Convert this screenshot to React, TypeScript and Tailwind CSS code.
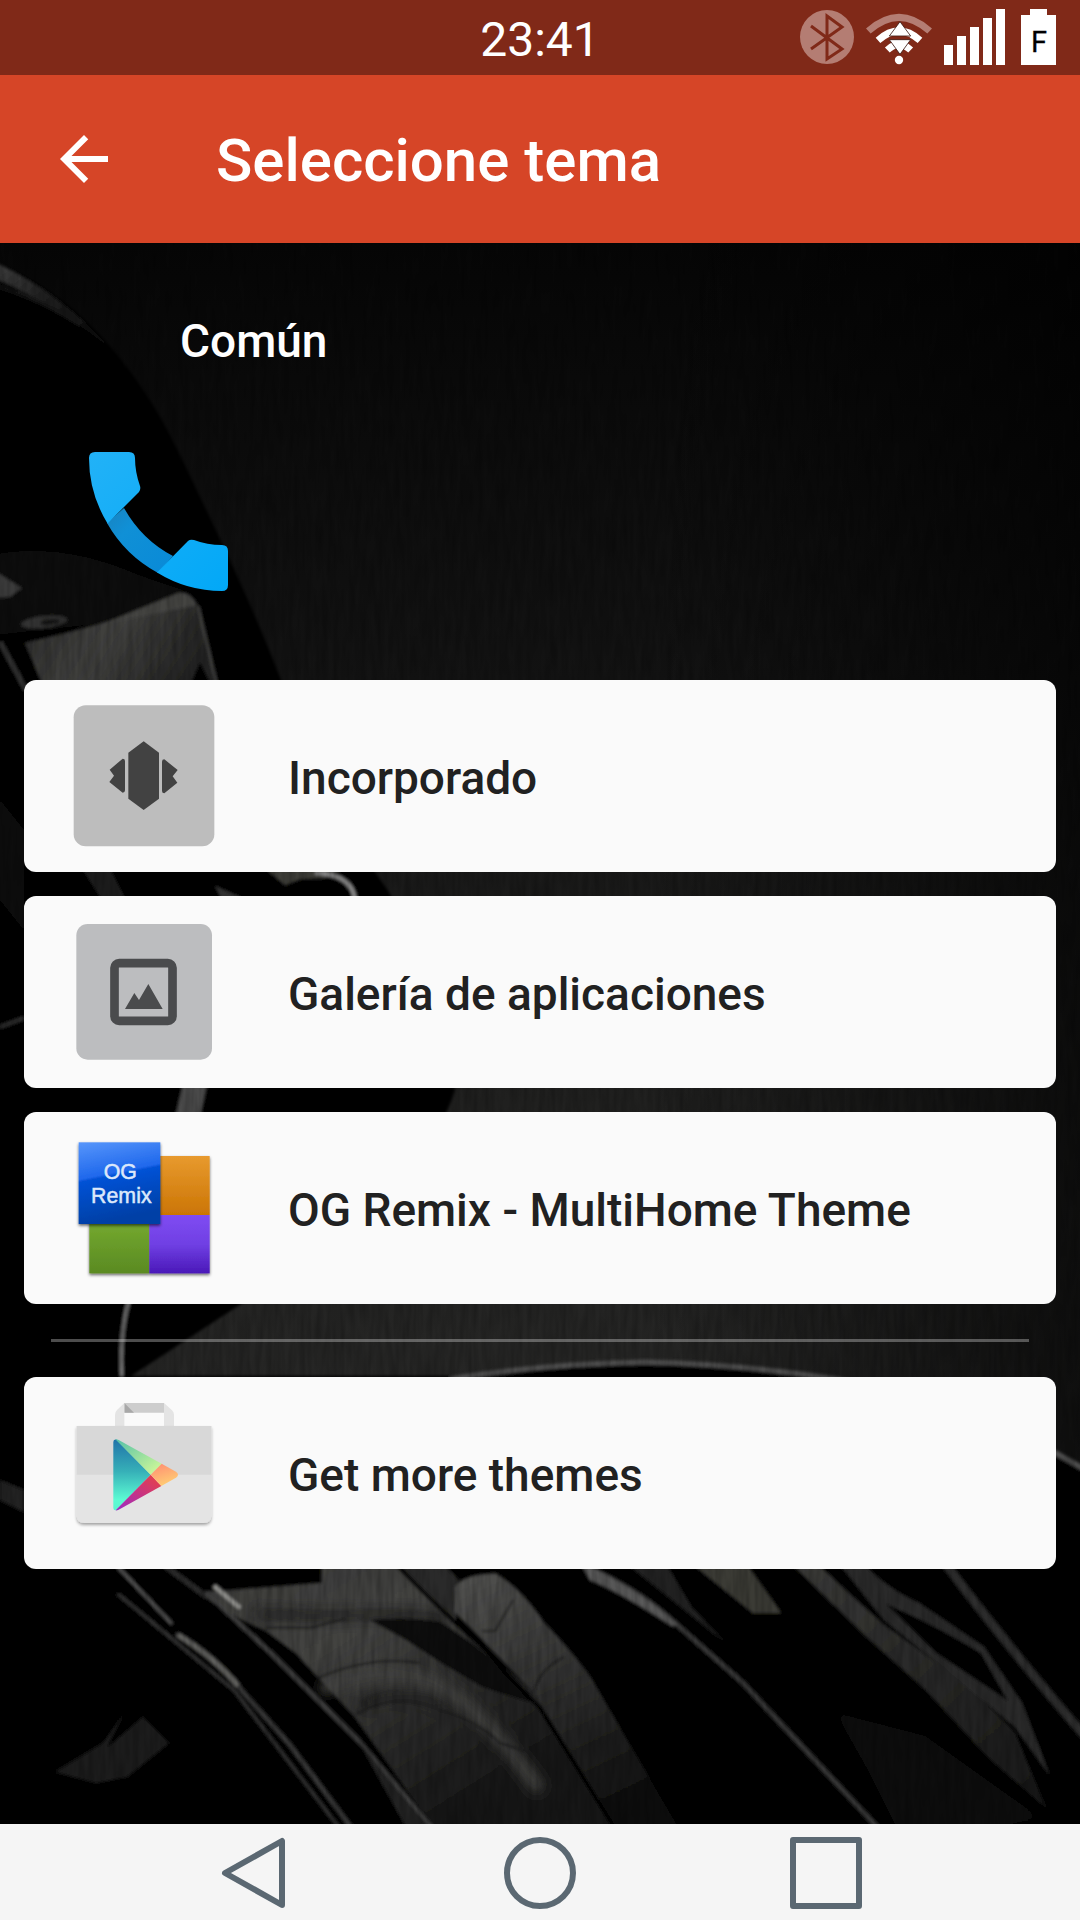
import type { ReactNode } from 'react';

interface ThemeOption {
  id: string;
  name: string;
  icon: ReactNode;
}

function BluetoothIcon() {
  return (
    <svg viewBox="0 0 54 54" className="size-[54px]" aria-hidden="true">
      <circle cx="27" cy="27" r="27" fill="#b47d73" />
      <path
        d="M11 16 L42 39 L27 49 V6 L42 17 L11 39"
        fill="none"
        stroke="#802918"
        strokeWidth="3"
      />
    </svg>
  );
}

function WifiIcon() {
  return (
    <svg viewBox="255 30 198 168" className="h-[56px] w-[66px]" aria-hidden="true">
      <path d="M262 96 Q354 14 446 96" fill="none" stroke="#b47d73" strokeWidth="21" />
      <path d="M291 124 Q354 68 417 124" fill="none" stroke="#fff" strokeWidth="21" />
      <path d="M319 153 Q354 120 389 153" fill="none" stroke="#fff" strokeWidth="21" />
      <path d="M357 68 L389 111 H325 Z" fill="#fff" stroke="#3b1a14" strokeWidth="2.5" />
      <path d="M357 166 L389 122 H325 Z" fill="#fff" stroke="#3b1a14" strokeWidth="2.5" />
      <path d="M328 116.500 H386" stroke="#802918" strokeWidth="7" />
      <circle cx="354" cy="183" r="12.500" fill="#fff" />
    </svg>
  );
}

function SignalIcon() {
  return (
    <svg viewBox="0 0 61 56" className="h-[56px] w-[61px]" fill="#fff" aria-hidden="true">
      <rect x="0" y="36" width="9" height="20" />
      <rect x="13" y="27" width="9" height="29" />
      <rect x="26" y="18" width="9" height="38" />
      <rect x="39" y="9" width="9" height="47" />
      <rect x="52" y="0" width="9" height="56" />
    </svg>
  );
}

function BatteryIcon() {
  return (
    <svg viewBox="0 0 35 56" className="ml-1 h-[56px] w-[35px]" aria-hidden="true">
      <path d="M9 0 H26 V6 H35 V56 H0 V6 H9 Z" fill="#fff" />
      <text x="18" y="43" textAnchor="middle" fontFamily="Roboto, sans-serif" fontSize="29" fill="#000" stroke="#000" strokeWidth="0.300">
        F
      </text>
    </svg>
  );
}

function StatusBar() {
  return (
    <div className="grid h-[75px] grid-cols-[1fr_auto_1fr] items-center bg-[#802918] px-6">
      <span />
      <time className="pt-1 text-5xl text-white">23:41</time>
      <div className="flex items-center justify-end gap-3 pb-px">
        <BluetoothIcon />
        <WifiIcon />
        <SignalIcon />
        <BatteryIcon />
      </div>
    </div>
  );
}

function PhoneIcon() {
  return (
    <svg viewBox="-1 -1 144 144" className="size-36" role="img" aria-label="Teléfono">
      <defs>
        <linearGradient id="phone" x1="0" y1="0" x2="140" y2="140" gradientUnits="userSpaceOnUse">
          <stop offset="0" stopColor="#22b2f7" />
          <stop offset="1" stopColor="#02a8f7" />
        </linearGradient>
        <linearGradient id="phoneGrip" x1="27" y1="64" x2="76" y2="112" gradientUnits="userSpaceOnUse">
          <stop offset="0" stopColor="#1588c9" />
          <stop offset="0.250" stopColor="#1090d6" />
          <stop offset="1" stopColor="#0a8bd7" />
        </linearGradient>
      </defs>
      <path d="M35 56 Q53 88 84 104 L69 121 Q36 103 18 71 Z" fill="url(#phoneGrip)" />
      <path
        d="M6 0 H40 Q46 0 46 6 Q46 20 51 34 Q52 37 50 40 L18.500 71.500 Q0 41 0 6 Q0 0 6 0 Z"
        fill="url(#phone)"
      />
      <path
        d="M68 120.500 L99 89 Q101 87 105 88 Q118 93 133 93 Q139 93 139 99 V133 Q139 139 133 139 Q98 139 68 120.500 Z"
        fill="url(#phone)"
      />
    </svg>
  );
}

function BuiltInIcon() {
  return (
    <svg viewBox="36 42 432 432" className="size-36" aria-hidden="true">
      <rect x="41" y="46" width="422" height="423" rx="36" fill="#bdbdbd" />
      <g fill="#424242">
        <path d="M251 154 L297 188 V326 L251 360 L205 326 V188 Z" />
        <path d="M188 206 Q195 206 195 213 V301 Q195 308 188 308 L148 276 L162 257 L149 239 Z" />
        <path d="M313 208 Q306 208 306 215 V303 Q306 310 313 310 L352 278 L338 259 L353 240 Z" />
      </g>
    </svg>
  );
}

function GalleryIcon() {
  return (
    <svg viewBox="36 60 432 432" className="size-36" aria-hidden="true">
      <rect x="49" y="72" width="407" height="407" rx="34" fill="#bcbdbf" />
      <rect x="163.500" y="189.500" width="174" height="173" rx="14" fill="none" stroke="#4a4b4d" strokeWidth="26" />
      <path d="M195 327 L223 279 L237 300 L265 252 L308 327 Z" fill="#4a4b4d" />
    </svg>
  );
}

function OgRemixIcon() {
  return (
    <svg viewBox="36 48 432 432" className="size-36" aria-hidden="true">
      <defs>
        <linearGradient id="ogBlue" x1="0" y1="0" x2="0.200" y2="1">
          <stop offset="0" stopColor="#5796fb" />
          <stop offset="0.440" stopColor="#1f68ec" />
          <stop offset="0.470" stopColor="#0552d6" />
          <stop offset="1" stopColor="#0140a6" />
        </linearGradient>
        <linearGradient id="ogOrange" x1="0" y1="0" x2="0" y2="1">
          <stop offset="0" stopColor="#e89a2e" />
          <stop offset="1" stopColor="#cb7505" />
        </linearGradient>
        <linearGradient id="ogPurple" x1="0" y1="0" x2="0" y2="1">
          <stop offset="0" stopColor="#7f4bf2" />
          <stop offset="0.500" stopColor="#7040e4" />
          <stop offset="1" stopColor="#4a18b8" />
        </linearGradient>
        <linearGradient id="ogGreen" x1="0" y1="0" x2="0" y2="1">
          <stop offset="0" stopColor="#78ad31" />
          <stop offset="1" stopColor="#5a8a22" />
        </linearGradient>
        <filter id="ogShadow" x="-10%" y="-10%" width="125%" height="125%">
          <feDropShadow dx="0" dy="5" stdDeviation="4" floodColor="#000" floodOpacity="0.600" />
        </filter>
      </defs>
      <g filter="url(#ogShadow)">
        <rect x="268" y="108" width="181" height="177" fill="url(#ogOrange)" />
        <rect x="88" y="285" width="180" height="175" fill="url(#ogGreen)" />
        <rect x="268" y="285" width="181" height="175" fill="url(#ogPurple)" />
      </g>
      <rect x="56" y="67" width="245" height="245" fill="url(#ogBlue)" filter="url(#ogShadow)" />
      <g fontFamily="'Liberation Sans', Arial, sans-serif" fill="#dce8fb" stroke="#dce8fb" strokeWidth="1.500" textAnchor="middle">
        <text x="181" y="177" fontSize="64">OG</text>
        <text x="184" y="248" fontSize="64">Remix</text>
      </g>
    </svg>
  );
}

function PlayStoreIcon() {
  return (
    <svg viewBox="36 63 432 432" className="size-36" aria-hidden="true">
      <defs>
        <linearGradient id="playTeal" x1="0" y1="0" x2="0" y2="1">
          <stop offset="0" stopColor="#2173a9" />
          <stop offset="0.450" stopColor="#36b0b8" />
          <stop offset="0.850" stopColor="#5cfbd3" />
          <stop offset="1" stopColor="#5cf5d0" />
        </linearGradient>
        <linearGradient id="playGreen" x1="0" y1="0" x2="1" y2="1">
          <stop offset="0" stopColor="#54c0a8" />
          <stop offset="1" stopColor="#d9fd97" />
        </linearGradient>
        <linearGradient id="playRed" x1="0" y1="1" x2="1" y2="0">
          <stop offset="0" stopColor="#9a2cc4" />
          <stop offset="0.500" stopColor="#c73483" />
          <stop offset="1" stopColor="#ea4141" />
        </linearGradient>
        <linearGradient id="playOrange" x1="0" y1="0" x2="0.400" y2="1">
          <stop offset="0" stopColor="#ff8a72" />
          <stop offset="1" stopColor="#ffcb74" />
        </linearGradient>
        <filter id="bagShadow" x="-10%" y="-10%" width="120%" height="125%">
          <feDropShadow dx="0" dy="6" stdDeviation="4" floodColor="#000" floodOpacity="0.350" />
        </filter>
      </defs>
      <path d="M193 69 H312 V98 H193 Z" fill="#cdcdcd" />
      <path d="M193 69 L222 98 H193 Z" fill="#a8a8a8" />
      <path d="M193 69 V138 H165 V104 Q165 96 171 90 Z" fill="#e4e4e4" />
      <path d="M312 69 V138 H342 V104 Q342 96 336 91 Z" fill="#e4e4e4" />
      <path d="M50 138 H454 V406 Q454 429 431 429 H73 Q50 429 50 406 Z" fill="#e4e4e4" filter="url(#bagShadow)" />
      <path d="M50 138 H454 V284 H50 Z" fill="#d8d8d8" />
      <path d="M160 186 Q160 176 170 179 L272 284 L168 391 Q160 392 160 384 Z" fill="url(#playTeal)" />
      <path d="M166 178 Q170 177 176 180 L305 251 L272 284 Z" fill="url(#playGreen)" />
      <path d="M167 391 L272 284 L304 318 L176 389 Q170 392 167 391 Z" fill="url(#playRed)" />
      <path d="M305 251 L348 275 Q360 284 348 293 L304 318 L272 284 Z" fill="url(#playOrange)" />
    </svg>
  );
}

// Dark car wallpaper behind the list
function Wallpaper() {
  return (
    <svg
      viewBox="0 243 1080 1581"
      preserveAspectRatio="xMidYMid slice"
      className="absolute inset-0 size-full"
      aria-hidden="true"
    >
      <defs>
        <linearGradient id="wallBase" x1="0" y1="243" x2="0" y2="1400" gradientUnits="userSpaceOnUse">
          <stop offset="0" stopColor="#060606" />
          <stop offset="0.350" stopColor="#121212" />
          <stop offset="0.700" stopColor="#1f1f1e" />
          <stop offset="1" stopColor="#262625" />
        </linearGradient>
        <linearGradient id="wallSide" x1="0" y1="0" x2="1" y2="0">
          <stop offset="0.600" stopColor="#000" stopOpacity="0" />
          <stop offset="1" stopColor="#000" stopOpacity="0.600" />
        </linearGradient>
        <linearGradient id="lamp" x1="0" y1="0" x2="1" y2="0.300">
          <stop offset="0" stopColor="#2c2c2b" />
          <stop offset="0.500" stopColor="#41413f" />
          <stop offset="1" stopColor="#232322" />
        </linearGradient>
        <linearGradient id="hood" x1="260" y1="1569" x2="420" y2="1824" gradientUnits="userSpaceOnUse">
          <stop offset="0" stopColor="#3e3e3c" />
          <stop offset="0.350" stopColor="#444442" />
          <stop offset="0.650" stopColor="#2e2e2d" />
          <stop offset="1" stopColor="#181818" />
        </linearGradient>
        <linearGradient id="hoodRight" x1="480" y1="1569" x2="600" y2="1824" gradientUnits="userSpaceOnUse">
          <stop offset="0" stopColor="#51514f" />
          <stop offset="0.400" stopColor="#363635" />
          <stop offset="1" stopColor="#0c0c0c" />
        </linearGradient>
        <linearGradient id="rim" x1="0" y1="0" x2="1" y2="1">
          <stop offset="0" stopColor="#404040" />
          <stop offset="0.500" stopColor="#1c1c1c" />
          <stop offset="1" stopColor="#050505" />
        </linearGradient>
        <linearGradient id="blade" x1="0" y1="0" x2="1" y2="1">
          <stop offset="0" stopColor="#3a3a38" />
          <stop offset="1" stopColor="#161616" />
        </linearGradient>
        <filter id="soft" x="-5%" y="-5%" width="110%" height="110%">
          <feGaussianBlur stdDeviation="1.800" />
        </filter>
        <filter id="softer" x="-10%" y="-10%" width="120%" height="120%">
          <feGaussianBlur stdDeviation="6" />
        </filter>
        <filter id="grain" x="0" y="0" width="100%" height="100%">
          <feTurbulence type="fractalNoise" baseFrequency="0.180 0.025" numOctaves="2" seed="4" />
          <feColorMatrix values="0 0 0 0 0  0 0 0 0 0  0 0 0 0 0  1.600 0 0 0 -0.500" />
        </filter>
      </defs>

      <rect y="243" width="1080" height="1581" fill="url(#wallBase)" />
      <rect y="243" width="1080" height="1581" fill="url(#wallSide)" />

      <g filter="url(#soft)">
        {/* fender */}
        <path
          d="M-10 262 C60 285 130 350 180 455 S250 600 281 680 L375 872 Q440 960 455 1090 Q430 1180 241 1304 L125 1380 H-10 Z"
          fill="#000"
        />
        <path d="M-10 260 Q60 292 112 350 Q62 308 -10 276 Z" fill="url(#rim)" />
        <path d="M-10 284 Q40 298 80 325" fill="none" stroke="#141414" strokeWidth="3" />
        <path d="M-10 555 Q60 540 140 575 L184 590 L100 624 L-10 636 Z" fill="#070707" />
        <path d="M-10 568 L22 588 L10 597 L-10 598 Z" fill="#3a3a3a" />
        <ellipse cx="44" cy="622" rx="23" ry="6" fill="#363634" transform="rotate(-6 44 622)" />
        <ellipse cx="50" cy="622" rx="10" ry="3" fill="#161616" transform="rotate(-6 50 622)" />

        {/* head lamp */}
        <path d="M25 643 L67 633 L133 615 L197 604 L217 690 H45 Z" fill="url(#lamp)" />
        <path d="M97 626 L178 593 Q190 591 197 605 L125 620 Z" fill="#444442" />
        <path d="M188 690 L200 662 L214 690 Z" fill="#050505" />
        <path d="M198 606 L218 690" stroke="#4c4c4a" strokeWidth="2" />
        <path d="M0 642 L26 690" stroke="#303030" strokeWidth="5" />
        <path d="M0 800 L24 830 V930 L0 900 Z" fill="#0c0c0c" />
        <path d="M80 865 H108 L126 900 H102 Z" fill="#1d1d1d" />
        <path d="M265 868 H345 L325 878 L300 879 L285 885 Z" fill="#3c3c38" />
        <path d="M315 873 Q352 874 355 900" fill="none" stroke="#8a8a8a" strokeWidth="4" />
        <path d="M215 886 L246 900 H222 Z" fill="#333" />
        <path d="M0 1027 L24 1018" stroke="#2f2f2f" strokeWidth="4" />
        <path d="M184 1080 H208 L199 1120 H175 Z" fill="#4c4c4c" />
        <path d="M129 1300 Q119 1336 122 1380" fill="none" stroke="#7c7c7c" strokeWidth="3" />

        {/* lower half */}
        <path
          d="M-10 1376 H455 Q540 1364 645 1362 Q740 1364 830 1377 Q960 1405 1056 1455 L1090 1475 V1834 H-10 Z"
          fill="#010101"
        />
        <path
          d="M450 1379 Q540 1364 645 1362 Q740 1364 835 1379 Q960 1405 1056 1453 L1090 1472"
          fill="none"
          stroke="#505050"
          strokeWidth="5"
        />
        <path d="M0 1480 L24 1490 V1512 L0 1500 Z" fill="#202020" />

        <path
          d="M200 1592 L235 1590 L322 1583 V1560 H395 L425 1590 L455 1625 L534 1693 L618 1834 H438 L355 1717 L296 1653 L265 1630 Q222 1612 200 1592 Z"
          fill="url(#hood)"
        />
        <path d="M395 1560 H440 L462 1584 L455 1625 Z" fill="#2c2c2a" />
        <path
          d="M455 1587 Q465 1574 496 1574 Q520 1588 544 1623 Q575 1655 592 1680 L682 1834 H620 L534 1693 L475 1632 L455 1612 Z"
          fill="url(#hoodRight)"
        />
        <g filter="url(#softer)" fill="none">
          <path d="M256 1614 Q300 1616 345 1616 Q400 1612 445 1620" stroke="#1e1e1e" strokeWidth="9" />
          <path d="M320 1690 Q380 1664 430 1680 Q480 1705 540 1790" stroke="#454543" strokeWidth="12" />
          <path d="M360 1706 Q400 1688 440 1706" stroke="#1c1c1c" strokeWidth="9" />
        </g>
        <path d="M370 1620 Q410 1616 441 1622 L475 1645 L538 1704 Q510 1697 482 1687 L441 1663 L406 1640 Z" fill="#070707" />
        <path d="M392 1560 Q440 1610 480 1645 L540 1708 L618 1834" fill="none" stroke="#000" strokeWidth="4" />
        <g fill="none" stroke="#1b1b1b" strokeWidth="2">
          <path d="M265 1628 H310 L345 1619" />
          <path d="M318 1678 Q370 1655 420 1663" />
          <path d="M356 1714 Q400 1690 440 1710 Q480 1722 500 1743 L530 1753" />
          <path d="M482 1631 H495 L513 1600" />
          <path d="M534 1692 Q538 1670 564 1657" />
        </g>

        {/* trim lines, left */}
        <path d="M117 1566 L172 1624" stroke="#555" strokeWidth="3" />
        <path d="M165 1566 L207 1597" stroke="#2c2c2c" strokeWidth="5" />
        <path d="M207 1593 L275 1657 L358 1740 L437 1834" fill="none" stroke="#404040" strokeWidth="4" />
        <path d="M214 1586 L240 1608" stroke="#9a9a96" strokeWidth="4" />
        <path d="M118 1594 L234 1690 L344 1834" fill="none" stroke="#343434" strokeWidth="3" />
        <path d="M176 1634 Q215 1655 243 1692 L290 1745 L356 1834" fill="none" stroke="#3a3a3a" strokeWidth="4" />
        <path d="M178 1635 Q215 1658 238 1686" fill="none" stroke="#666664" strokeWidth="5" />
        <path d="M358 1740 L410 1834 H432 Z" fill="#242424" />
        <path d="M143 1717 L169 1743 L127 1777 L96 1783 L55 1772 L103 1743 L124 1713 L107 1748 Z" fill="#1a1a1a" />

        {/* trim lines, right */}
        <path d="M585 1566 Q640 1590 674 1622 L743 1683 L880 1830" fill="none" stroke="#3a3a3a" strokeWidth="4" />
        <path d="M580 1562 Q640 1590 678 1625 L672 1626 Q620 1592 590 1580 Z" fill="#5a5a5a" />
        <path d="M625 1562 H665 L692 1608 L726 1643 Z" fill="#222" />
        <path d="M690 1562 H745 L781 1613 L753 1613 Z" fill="#3a3a36" />
        <path
          d="M790 1562 H815 Q850 1595 884 1625 L970 1687 L1015 1733 L1046 1808 L988 1757 L926 1690 L867 1637 Z"
          fill="url(#blade)"
        />
        <path
          d="M838 1562 H862 Q885 1588 919 1603 L984 1647 L1022 1703 L1050 1776 L1015 1727 L946 1670 L884 1620 Z"
          fill="#292929"
        />
        <path d="M886 1604 Q930 1622 981 1653 L1008 1701 L936 1653 Z" fill="#030303" />
        <path d="M944 1562 Q1010 1650 1090 1742" fill="none" stroke="#2d2d2d" strokeWidth="8" />
        <path d="M836 1713 L925 1736 L1040 1818 L960 1834 H900 L868 1770 Z" fill="#0f0f0f" filter="url(#softer)" />
      </g>

      <rect y="243" width="1080" height="1581" filter="url(#grain)" opacity="0.250" />
    </svg>
  );
}

const themes: ThemeOption[] = [
  { id: 'builtin', name: 'Incorporado', icon: <BuiltInIcon /> },
  { id: 'gallery', name: 'Galería de aplicaciones', icon: <GalleryIcon /> },
  { id: 'og-remix', name: 'OG Remix - MultiHome Theme', icon: <OgRemixIcon /> },
];

function ThemeCard({ name, icon }: { name: string; icon: ReactNode }) {
  return (
    <button
      type="button"
      className="flex h-48 w-full items-center gap-[72px] rounded-xl bg-[#fafafa] px-12 text-left text-[#212121]"
    >
      {icon}
      <span className="pt-1 text-[46px] font-medium">{name}</span>
    </button>
  );
}

export default function App() {
  return (
    <div className="flex min-h-screen flex-col bg-black font-['Roboto',sans-serif]">
      <StatusBar />

      <header className="flex h-[168px] items-center gap-24 bg-[#d64527] px-12 text-white">
        <button type="button" aria-label="Atrás">
          <svg viewBox="0 0 24 24" className="size-[72px]" fill="currentColor" aria-hidden="true">
            <path d="M20 11H7.830l5.590-5.590L12 4l-8 8 8 8 1.410-1.410L7.830 13H20v-2z" />
          </svg>
        </button>
        <h1 className="pt-1 text-[60px] font-medium">Seleccione tema</h1>
      </header>

      <main className="relative flex-1">
        <Wallpaper />
        <div className="relative px-6 pt-12 pb-12">
          <h2 className="flex h-24 items-center px-39 pt-1 text-[46px] font-medium text-white">Común</h2>
          <div className="px-16 pt-16 pb-[85px]">
            <PhoneIcon />
          </div>

          <ul className="flex flex-col gap-6">
            {themes.map((theme) => (
              <li key={theme.id}>
                <ThemeCard name={theme.name} icon={theme.icon} />
              </li>
            ))}
          </ul>

          <hr className="mx-[27px] my-[35px] border-t-3 border-white/30" />

          <ThemeCard name="Get more themes" icon={<PlayStoreIcon />} />
        </div>
      </main>

      <nav className="flex h-24 items-center justify-center gap-[214px] bg-[#f5f5f5] pt-[2px] text-[#5b6872]">
        <button type="button" aria-label="Atrás">
          <svg viewBox="0 0 72 72" className="size-18" fill="none" stroke="currentColor" strokeWidth="6" strokeLinejoin="round" aria-hidden="true">
            <path d="M64 4 V68 L7 36 Z" />
          </svg>
        </button>
        <button type="button" aria-label="Inicio">
          <svg viewBox="0 0 72 72" className="size-18" fill="none" stroke="currentColor" strokeWidth="6" aria-hidden="true">
            <circle cx="36" cy="36" r="33" />
          </svg>
        </button>
        <button type="button" aria-label="Recientes">
          <svg viewBox="0 0 72 72" className="size-18" fill="none" stroke="currentColor" strokeWidth="6" strokeLinejoin="round" aria-hidden="true">
            <rect x="3" y="3" width="66" height="66" />
          </svg>
        </button>
      </nav>
    </div>
  );
}
